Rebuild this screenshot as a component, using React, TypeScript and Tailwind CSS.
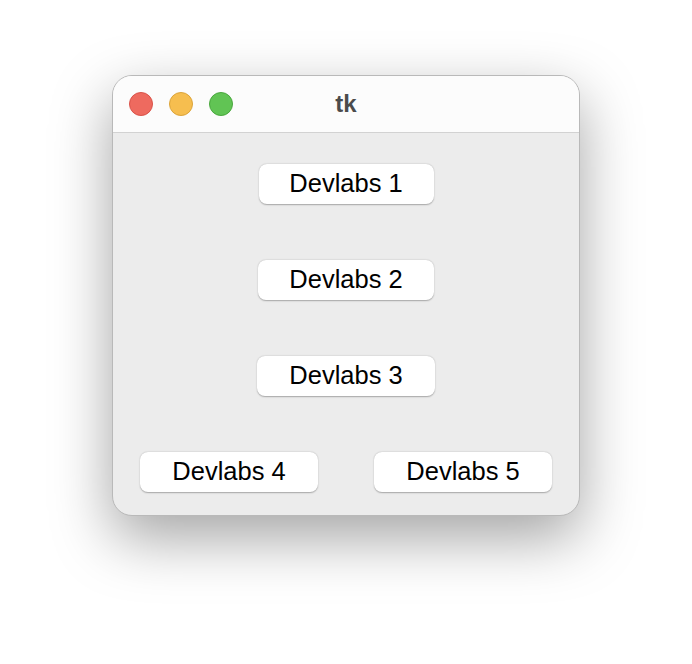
import React from 'react';

function TkButton({ label, className = '' }: { label: string; className?: string }) {
    return (
        <button
            className={`h-10 rounded-[8px] bg-white text-[25.5px] leading-none text-black shadow-[0_0.5px_1.5px_rgba(0,0,0,0.3)] ${className}`}
        >
            {label}
        </button>
    );
}

export default function App() {
    return (
        <div className="flex h-[664px] w-[692px] justify-center bg-white pt-[75px] font-['Liberation_Sans',Arial,sans-serif]">
            <div className="flex h-[441px] w-[468px] flex-col overflow-hidden rounded-[20px] border border-[#b9b9b9] bg-[#ececec] shadow-[0_22px_60px_rgba(0,0,0,0.36)]">
                {/* Title bar */}
                <div className="relative flex h-[57px] shrink-0 items-center border-b border-[#d2d2d2] bg-[#fcfcfc]">
                    <div className="flex gap-4 pl-[16px]">
                        <span className="h-6 w-6 rounded-full border border-[#d9534a] bg-[#ee6a5f]" />
                        <span className="h-6 w-6 rounded-full border border-[#dba43b] bg-[#f6be4f]" />
                        <span className="h-6 w-6 rounded-full border border-[#4aa73e] bg-[#61c454]" />
                    </div>
                    <span className="absolute left-1/2 -translate-x-1/2 text-[24px] font-bold text-[#4b4b4b]">tk</span>
                </div>

                {/* Body */}
                <div className="flex flex-col gap-[56px] pt-[31px]">
                    <div className="flex justify-center">
                        <TkButton label="Devlabs 1" className="w-[175px]" />
                    </div>
                    <div className="flex justify-center">
                        <TkButton label="Devlabs 2" className="w-[176px]" />
                    </div>
                    <div className="flex justify-center">
                        <TkButton label="Devlabs 3" className="w-[178px]" />
                    </div>
                    <div className="flex justify-between px-[27px]">
                        <TkButton label="Devlabs 4" className="w-[178px]" />
                        <TkButton label="Devlabs 5" className="w-[178px]" />
                    </div>
                </div>
            </div>
        </div>
    );
}
